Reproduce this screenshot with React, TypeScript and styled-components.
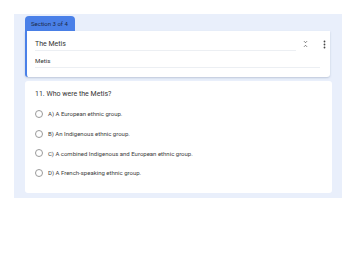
import React from "react";
import styled, { createGlobalStyle } from "styled-components";

const GlobalStyle = createGlobalStyle`
  html, body {
    margin: 0;
    padding: 0;
    background: #ffffff;
    font-family: Roboto, "Liberation Sans", Arial, sans-serif;
  }
`;

const Page = styled.div`
  width: 350px;
  height: 263px;
  padding: 14px 8px 0 14px;
  box-sizing: border-box;
`;

const Panel = styled.div`
  background: #e9effb;
  padding: 2px 10px 5px 11px;
  display: flex;
  flex-direction: column;
`;

const Tab = styled.div`
  align-self: flex-start;
  background: #4a80e8;
  color: #1b2a4a;
  font-size: 6px;
  height: 15px;
  line-height: 15px;
  padding: 0 7px 0 6px;
  border-radius: 4px 4px 0 0;
`;

const HeaderCard = styled.div`
  background: #ffffff;
  border-left: 2px solid #4a80e8;
  border-radius: 0 0 3px 3px;
  box-shadow: 0 1px 2px rgba(60, 80, 120, 0.25);
  margin-right: 2px;
  padding: 6px 10px 9px 8px;
  display: flex;
  flex-direction: column;
  gap: 3px;
`;

const TitleRow = styled.div`
  display: flex;
  align-items: center;
  margin-right: -6px;
`;

const Field = styled.div<{ $size: number }>`
  flex: 1;
  font-size: ${(p) => p.$size}px;
  line-height: 8px;
  color: #333;
  padding: 3px 0 2px;
  border-bottom: 1px solid #eceff3;
`;

const Icons = styled.div`
  display: flex;
  align-items: center;
  gap: 15px;
  margin-left: 7px;
`;

const QuestionCard = styled.div`
  background: #ffffff;
  margin-top: 4px;
  border-radius: 3px;
  padding: 9px 10px 10px 10px;
  display: flex;
  flex-direction: column;
`;

const Question = styled.div`
  font-size: 7px;
  line-height: 8px;
  color: #333;
  margin-bottom: 6px;
`;

const Option = styled.label`
  display: flex;
  align-items: center;
  gap: 5px;
  height: 19.7px;
  font-size: 6px;
  color: #3c3c3c;
`;

const Radio = styled.span`
  width: 8px;
  height: 8px;
  border: 1px solid #9a9a9a;
  border-radius: 50%;
  box-sizing: border-box;
`;

const options = [
  "A) A European ethnic group.",
  "B) An Indigenous ethnic group.",
  "C) A combined Indigenous and European ethnic group.",
  "D) A French-speaking ethnic group.",
];

export default function App() {
  return (
    <>
      <GlobalStyle />
      <Page>
        <Panel>
          <Tab>Section 3 of 4</Tab>
          <HeaderCard>
            <TitleRow>
              <Field $size={7}>The Metis</Field>
              <Icons>
                <svg width="5" height="8" viewBox="0 0 5 8" fill="none" stroke="#555" strokeWidth="0.8">
                  <path d="M1 1.2 L2.5 2.7 L4 1.2" />
                  <path d="M1 6.8 L2.5 5.3 L4 6.8" />
                </svg>
                <svg width="3" height="9" viewBox="0 0 3 9" fill="#444">
                  <circle cx="1.5" cy="1.5" r="0.9" />
                  <circle cx="1.5" cy="4.5" r="0.9" />
                  <circle cx="1.5" cy="7.5" r="0.9" />
                </svg>
              </Icons>
            </TitleRow>
            <Field $size={6.2}>Metis</Field>
          </HeaderCard>
          <QuestionCard>
            <Question>11. Who were the Metis?</Question>
            {options.map((o) => (
              <Option key={o}>
                <Radio />
                {o}
              </Option>
            ))}
          </QuestionCard>
        </Panel>
      </Page>
    </>
  );
}
